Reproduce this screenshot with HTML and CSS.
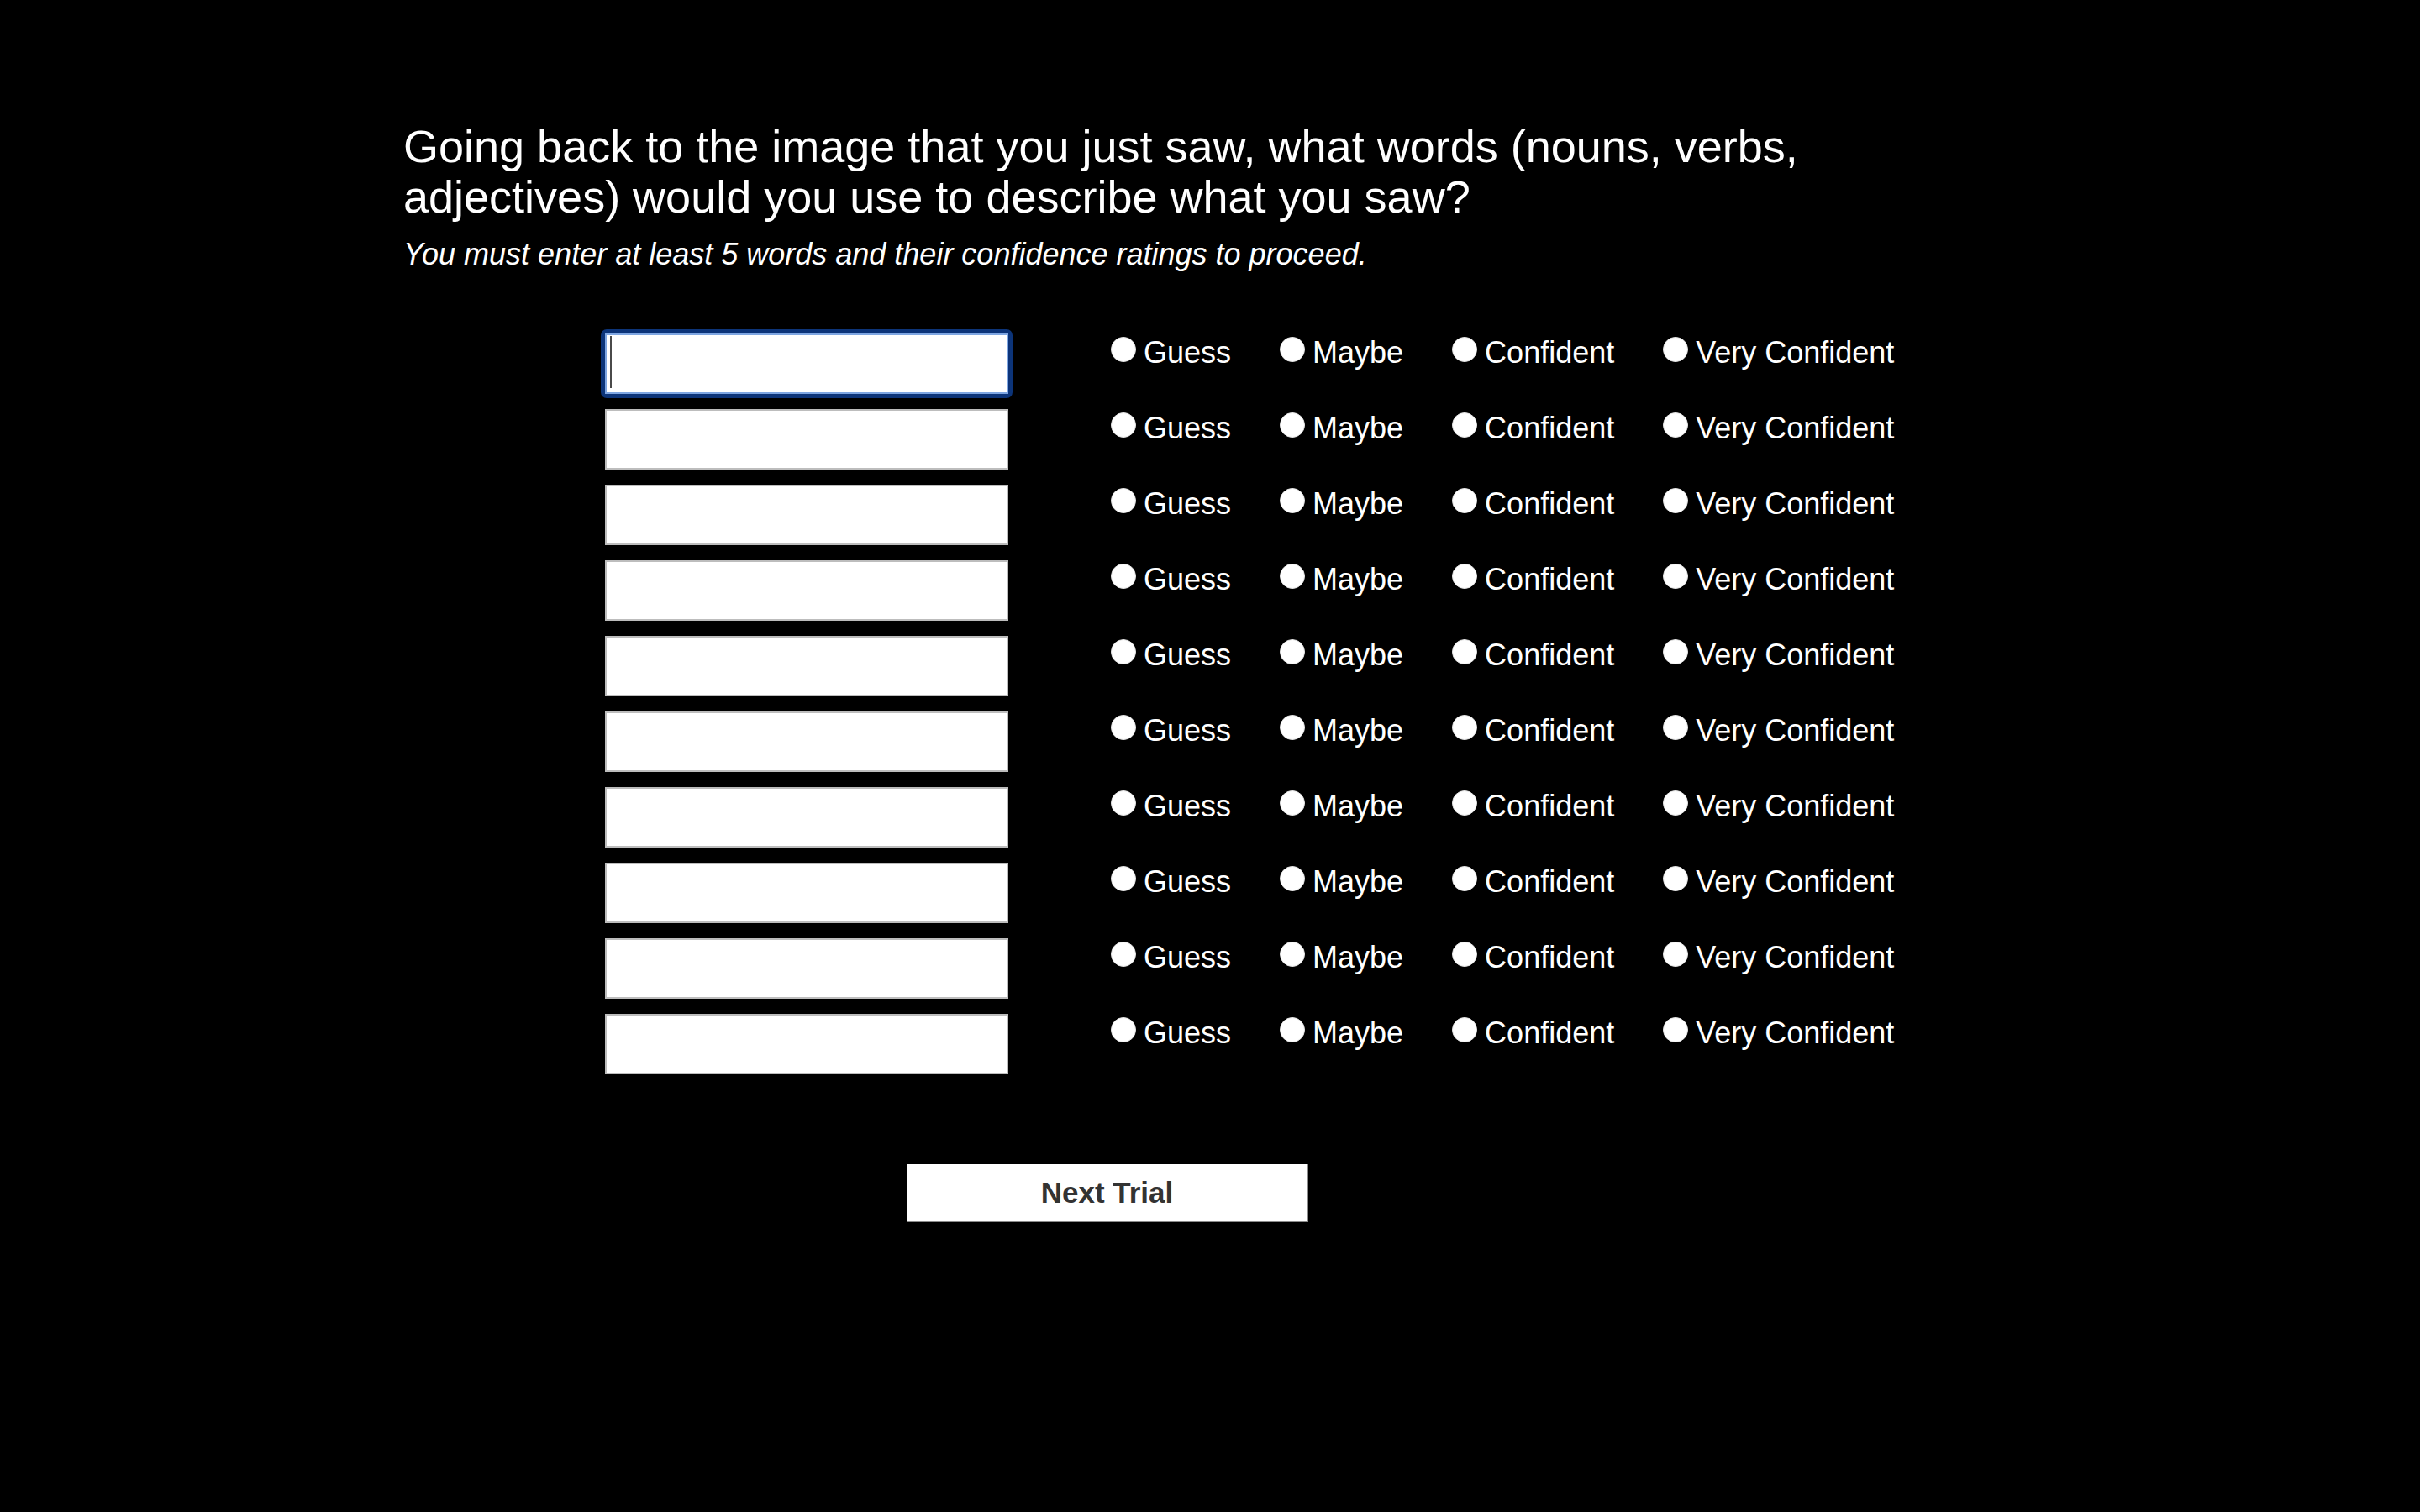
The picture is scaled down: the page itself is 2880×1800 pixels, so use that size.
FILE: index.html
```html
<!DOCTYPE html>
<html lang="en">
<head>
<meta charset="utf-8">
<title>Describe the image</title>
<link rel="stylesheet" href="styles.css">
</head>
<body>
<main class="page">
  <h1 class="question">Going back to the image that you just saw, what words (nouns, verbs, adjectives) would you use to describe what you saw?</h1>
  <p class="note">You must enter at least 5 words and their confidence ratings to proceed.</p>
  <form class="words">
    <div class="rows">
      <div class="row">
        <span class="field field--active"><input class="word" type="text" aria-label="Word 1"></span>
        <div class="ratings">
          <label class="opt"><input class="dot" type="radio" name="c1"><span>Guess</span></label>
          <label class="opt"><input class="dot" type="radio" name="c1"><span>Maybe</span></label>
          <label class="opt"><input class="dot" type="radio" name="c1"><span>Confident</span></label>
          <label class="opt"><input class="dot" type="radio" name="c1"><span>Very Confident</span></label>
        </div>
      </div>
      <div class="row">
        <span class="field"><input class="word" type="text" aria-label="Word 2"></span>
        <div class="ratings">
          <label class="opt"><input class="dot" type="radio" name="c2"><span>Guess</span></label>
          <label class="opt"><input class="dot" type="radio" name="c2"><span>Maybe</span></label>
          <label class="opt"><input class="dot" type="radio" name="c2"><span>Confident</span></label>
          <label class="opt"><input class="dot" type="radio" name="c2"><span>Very Confident</span></label>
        </div>
      </div>
      <div class="row">
        <span class="field"><input class="word" type="text" aria-label="Word 3"></span>
        <div class="ratings">
          <label class="opt"><input class="dot" type="radio" name="c3"><span>Guess</span></label>
          <label class="opt"><input class="dot" type="radio" name="c3"><span>Maybe</span></label>
          <label class="opt"><input class="dot" type="radio" name="c3"><span>Confident</span></label>
          <label class="opt"><input class="dot" type="radio" name="c3"><span>Very Confident</span></label>
        </div>
      </div>
      <div class="row">
        <span class="field"><input class="word" type="text" aria-label="Word 4"></span>
        <div class="ratings">
          <label class="opt"><input class="dot" type="radio" name="c4"><span>Guess</span></label>
          <label class="opt"><input class="dot" type="radio" name="c4"><span>Maybe</span></label>
          <label class="opt"><input class="dot" type="radio" name="c4"><span>Confident</span></label>
          <label class="opt"><input class="dot" type="radio" name="c4"><span>Very Confident</span></label>
        </div>
      </div>
      <div class="row">
        <span class="field"><input class="word" type="text" aria-label="Word 5"></span>
        <div class="ratings">
          <label class="opt"><input class="dot" type="radio" name="c5"><span>Guess</span></label>
          <label class="opt"><input class="dot" type="radio" name="c5"><span>Maybe</span></label>
          <label class="opt"><input class="dot" type="radio" name="c5"><span>Confident</span></label>
          <label class="opt"><input class="dot" type="radio" name="c5"><span>Very Confident</span></label>
        </div>
      </div>
      <div class="row">
        <span class="field"><input class="word" type="text" aria-label="Word 6"></span>
        <div class="ratings">
          <label class="opt"><input class="dot" type="radio" name="c6"><span>Guess</span></label>
          <label class="opt"><input class="dot" type="radio" name="c6"><span>Maybe</span></label>
          <label class="opt"><input class="dot" type="radio" name="c6"><span>Confident</span></label>
          <label class="opt"><input class="dot" type="radio" name="c6"><span>Very Confident</span></label>
        </div>
      </div>
      <div class="row">
        <span class="field"><input class="word" type="text" aria-label="Word 7"></span>
        <div class="ratings">
          <label class="opt"><input class="dot" type="radio" name="c7"><span>Guess</span></label>
          <label class="opt"><input class="dot" type="radio" name="c7"><span>Maybe</span></label>
          <label class="opt"><input class="dot" type="radio" name="c7"><span>Confident</span></label>
          <label class="opt"><input class="dot" type="radio" name="c7"><span>Very Confident</span></label>
        </div>
      </div>
      <div class="row">
        <span class="field"><input class="word" type="text" aria-label="Word 8"></span>
        <div class="ratings">
          <label class="opt"><input class="dot" type="radio" name="c8"><span>Guess</span></label>
          <label class="opt"><input class="dot" type="radio" name="c8"><span>Maybe</span></label>
          <label class="opt"><input class="dot" type="radio" name="c8"><span>Confident</span></label>
          <label class="opt"><input class="dot" type="radio" name="c8"><span>Very Confident</span></label>
        </div>
      </div>
      <div class="row">
        <span class="field"><input class="word" type="text" aria-label="Word 9"></span>
        <div class="ratings">
          <label class="opt"><input class="dot" type="radio" name="c9"><span>Guess</span></label>
          <label class="opt"><input class="dot" type="radio" name="c9"><span>Maybe</span></label>
          <label class="opt"><input class="dot" type="radio" name="c9"><span>Confident</span></label>
          <label class="opt"><input class="dot" type="radio" name="c9"><span>Very Confident</span></label>
        </div>
      </div>
      <div class="row">
        <span class="field"><input class="word" type="text" aria-label="Word 10"></span>
        <div class="ratings">
          <label class="opt"><input class="dot" type="radio" name="c10"><span>Guess</span></label>
          <label class="opt"><input class="dot" type="radio" name="c10"><span>Maybe</span></label>
          <label class="opt"><input class="dot" type="radio" name="c10"><span>Confident</span></label>
          <label class="opt"><input class="dot" type="radio" name="c10"><span>Very Confident</span></label>
        </div>
      </div>
    </div>
    <div class="actions">
      <button class="next" type="button">Next Trial</button>
    </div>
  </form>
</main>
</body>
</html>
```
FILE: styles.css
```css
html, body {
  margin: 0;
  padding: 0;
  background: #000;
}

body {
  min-height: 1800px;
  color: #fff;
  font-family: "Liberation Sans", Arial, Helvetica, sans-serif;
}

.page {
  width: 1920px;
  margin: 0 auto;
  padding-top: 144px;
}

.question {
  margin: 0;
  font-size: 54px;
  line-height: 60px;
  font-weight: normal;
}

.note {
  margin: 18px 0 0;
  font-size: 36px;
  line-height: 41px;
  font-style: italic;
}

.words {
  margin: 74px 0 0;
}

.rows {
  display: flex;
  flex-direction: column;
  gap: 18px;
}

.row {
  display: flex;
  align-items: flex-start;
  padding-left: 240px;
}

.field {
  display: block;
  position: relative;
  width: 480px;
  height: 72px;
}

.word {
  display: block;
  box-sizing: border-box;
  width: 480px;
  height: 72px;
  margin: 0;
  padding: 0 8px;
  border: 2px solid #bdbdbd;
  border-radius: 0;
  background: #fff;
  font-family: "Liberation Sans", Arial, sans-serif;
  font-size: 36px;
  outline: none;
}

.field--active {
  margin: -5px;
  padding: 5px;
  background: #0c3479;
  border-radius: 7px;
}

.field--active .word {
  border-color: #7ea6e2;
}

.field--active::after {
  content: "";
  position: absolute;
  left: 11px;
  top: 8px;
  width: 2px;
  height: 62px;
  background: #4a4a4a;
}

.ratings {
  display: flex;
  gap: 58px;
  margin-left: 122px;
  padding-top: 2px;
}

.opt {
  display: flex;
  align-items: flex-start;
  gap: 9px;
  font-size: 36px;
  line-height: 41px;
  color: #fff;
  cursor: pointer;
}

.dot {
  appearance: none;
  -webkit-appearance: none;
  flex: none;
  box-sizing: border-box;
  width: 30px;
  height: 30px;
  margin: 2px 0 0;
  border: 1px solid #e6e6e6;
  border-radius: 50%;
  background: #fff;
}

.actions {
  display: flex;
  padding-left: 600px;
  margin-top: 107px;
}

.next {
  box-sizing: border-box;
  width: 477px;
  height: 69px;
  margin: 0;
  padding: 0;
  border: 0;
  border-right: 2px solid #8c8c8c;
  border-bottom: 2px solid #8c8c8c;
  border-radius: 0;
  background: #fff;
  color: #333;
  font-family: "Liberation Sans", Arial, sans-serif;
  font-size: 35px;
  font-weight: bold;
  cursor: pointer;
}
```
